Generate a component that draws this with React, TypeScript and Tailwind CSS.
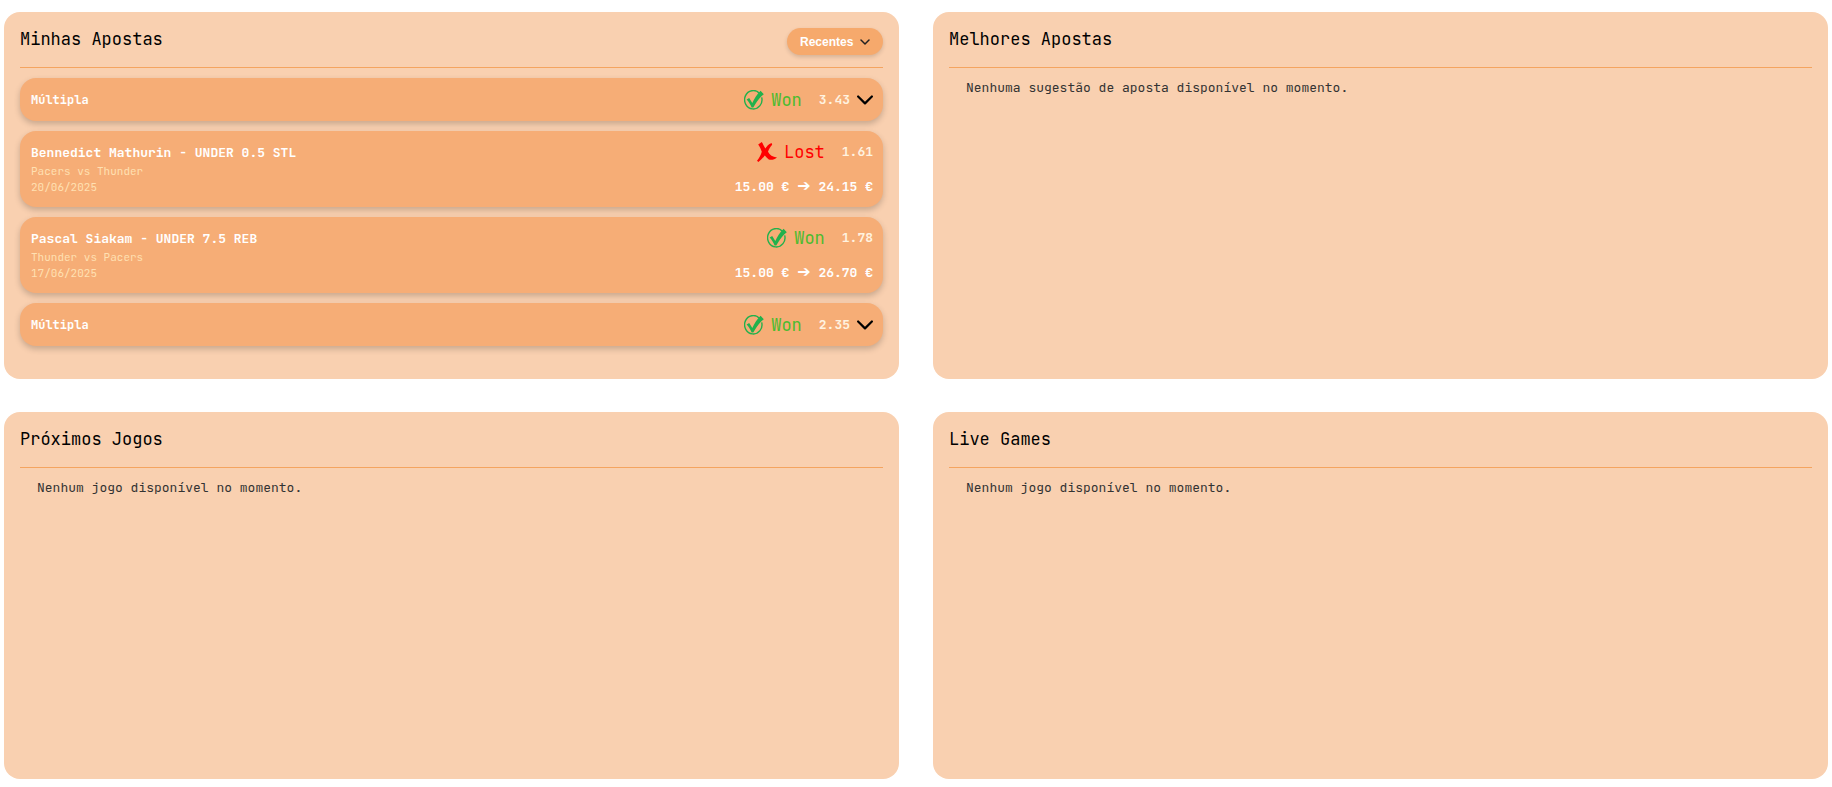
import { useState, type ReactNode } from "react";

type Status = "won" | "lost";

interface Bet {
  id: number;
  title: string;
  status: Status;
  odd: string;
  match?: string;
  date?: string;
  stake?: string;
  payout?: string;
}

const bets: Bet[] = [
  { id: 1, title: "Múltipla", status: "won", odd: "3.43" },
  {
    id: 2,
    title: "Bennedict Mathurin - UNDER 0.5 STL",
    status: "lost",
    odd: "1.61",
    match: "Pacers vs Thunder",
    date: "20/06/2025",
    stake: "15.00 €",
    payout: "24.15 €",
  },
  {
    id: 3,
    title: "Pascal Siakam - UNDER 7.5 REB",
    status: "won",
    odd: "1.78",
    match: "Thunder vs Pacers",
    date: "17/06/2025",
    stake: "15.00 €",
    payout: "26.70 €",
  },
  { id: 4, title: "Múltipla", status: "won", odd: "2.35" },
];

function WonIcon() {
  return (
    <svg viewBox="0 0 20 20" className="size-5 shrink-0" aria-hidden="true">
      <path
        d="M15.4 3.2 A8.7 9.2 0 1 0 17.7 7.4"
        fill="none"
        stroke="#22b14c"
        strokeWidth="1.4"
      />
      <path
        d="M2.6 9.4 L5.2 8.1 L8.3 13 C10.3 8.6 13 4.2 16.6 .8 L19.8 4.2 L17.4 6.2 C14.3 9.2 11.6 13.2 9.3 17.6 L7.6 17.4 C6.4 14.4 4.8 11.7 2.6 9.4 Z"
        fill="#22b14c"
      />
    </svg>
  );
}

function LostIcon() {
  return (
    <svg viewBox="0 0 20 20" className="size-5 shrink-0" aria-hidden="true">
      <path
        d="M1.2 2.4 L4.8 0 C6.2 2.2 7 4.6 8.3 6.6 C9.8 4.2 11.6 2.2 14.6 1 L15.2 2.8 C13.4 4.8 11.9 7 11 9.8 C12.8 13.2 15.4 14.9 20 15.4 C17.6 17.4 14.6 18.2 11.8 17.4 C10.2 16.4 8.9 15 7.8 13.6 C6 15.9 4 18 1.4 20 L0 18.8 C2.2 16.2 3.8 13.2 4.8 9.8 C4 7.2 2.8 4.6 1.2 2.4 Z"
        fill="#ff0000"
      />
    </svg>
  );
}

function StatusBadge({ status }: { status: Status }) {
  return status === "won" ? (
    <span className="flex items-center gap-[7px] text-[17px] leading-5 text-[#4cbb2f]">
      <WonIcon />
      Won
    </span>
  ) : (
    <span className="flex items-center gap-[7px] text-[17px] leading-5 text-[#ff0000]">
      <LostIcon />
      Lost
    </span>
  );
}

function MultipleRow({ bet }: { bet: Bet }) {
  const [open, setOpen] = useState(false);
  return (
    <li className="flex h-[43px] items-center justify-between rounded-2xl bg-[#f6ad76] pr-[10px] pl-[11px] shadow-[0_3px_6px_rgba(0,0,0,0.2)]">
      <span className="text-xs font-bold text-white">{bet.title}</span>
      <div className="flex items-center">
        <StatusBadge status={bet.status} />
        <span className="ml-[17px] text-[13px] font-bold text-[#fff3e0]">{bet.odd}</span>
        <button
          type="button"
          aria-label={bet.title}
          aria-expanded={open}
          onClick={() => setOpen(!open)}
          className="ml-[7px] cursor-pointer"
        >
          <svg
            viewBox="0 0 16 16"
            className={open ? "size-4 rotate-180" : "size-4"}
            fill="none"
            stroke="#000"
            strokeWidth="2.2"
            strokeLinecap="round"
            strokeLinejoin="round"
            aria-hidden="true"
          >
            <path d="M1.1 4.5 L8 11.4 L14.9 4.5" />
          </svg>
        </button>
      </div>
    </li>
  );
}

function SingleRow({ bet }: { bet: Bet }) {
  return (
    <li className="flex h-[76px] items-center justify-between rounded-2xl bg-[#f6ad76] pr-[10px] pl-[11px] shadow-[0_3px_6px_rgba(0,0,0,0.2)]">
      <div className="flex flex-col">
        <span className="text-[13px] leading-5 font-bold text-white">{bet.title}</span>
        <span className="text-[11px] leading-4 text-[#ffe0b2]">{bet.match}</span>
        <span className="text-[11px] leading-4 text-[#ffe0b2]">{bet.date}</span>
      </div>
      <div className="flex flex-col items-end gap-[14px]">
        <div className="flex items-center">
          <StatusBadge status={bet.status} />
          <span className="ml-[17px] text-[13px] leading-5 font-bold text-[#fff3e0]">{bet.odd}</span>
        </div>
        <span className="text-[13px] leading-5 font-bold text-white">
          {bet.stake} <span className="font-['DejaVu_Sans',sans-serif] text-base leading-5">➔</span> {bet.payout}
        </span>
      </div>
    </li>
  );
}

function Panel({ title, action, children }: { title: string; action?: ReactNode; children: ReactNode }) {
  return (
    <section className="rounded-2xl bg-[#f9d0b0] p-4">
      <header className="flex h-10 items-start justify-between border-b border-[#f4a460]">
        <h2 className="text-[17px] leading-[23px] text-black">{title}</h2>
        {action}
      </header>
      {children}
    </section>
  );
}

function EmptyText({ children }: { children: ReactNode }) {
  return <p className="px-[17px] pt-[10px] text-[13px] leading-5 text-[#333]">{children}</p>;
}

function SortSelect() {
  return (
    <div className="relative flex">
      <select
        aria-label="Ordenar apostas"
        className="h-[27px] w-24 cursor-pointer appearance-none rounded-full bg-[#f6a96c] pr-7 pl-[13px] font-['Liberation_Sans',sans-serif] text-xs font-bold text-white shadow-[0_2px_4px_rgba(0,0,0,0.15)]"
      >
        <option>Recentes</option>
      </select>
      <svg
        viewBox="0 0 10 10"
        className="pointer-events-none absolute top-[9px] right-[13px] size-[10px]"
        fill="none"
        stroke="#222"
        strokeWidth="1.5"
        strokeLinecap="round"
        strokeLinejoin="round"
        aria-hidden="true"
      >
        <path d="M1 3 L5 7 L9 3" />
      </svg>
    </div>
  );
}

export default function App() {
  return (
    <main className="grid min-h-screen grid-cols-2 grid-rows-2 gap-x-[34px] gap-y-[33px] bg-white px-1 pt-3 pb-2 font-['JetBrains_Mono','DejaVu_Sans_Mono',monospace]">
      <Panel title="Minhas Apostas" action={<SortSelect />}>
        <ul className="flex flex-col gap-[10px] pt-[10px]">
          {bets.map((bet) =>
            bet.match ? <SingleRow key={bet.id} bet={bet} /> : <MultipleRow key={bet.id} bet={bet} />,
          )}
        </ul>
      </Panel>
      <Panel title="Melhores Apostas">
        <EmptyText>Nenhuma sugestão de aposta disponível no momento.</EmptyText>
      </Panel>
      <Panel title="Próximos Jogos">
        <EmptyText>Nenhum jogo disponível no momento.</EmptyText>
      </Panel>
      <Panel title="Live Games">
        <EmptyText>Nenhum jogo disponível no momento.</EmptyText>
      </Panel>
    </main>
  );
}
